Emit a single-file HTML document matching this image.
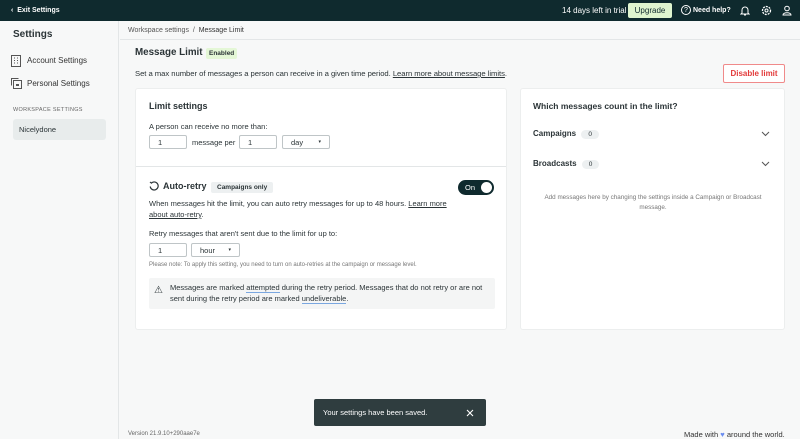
<!DOCTYPE html>
<html><head><style>
*{box-sizing:border-box;margin:0;padding:0}
body{width:800px;height:439px;overflow:hidden;font-family:"Liberation Sans",sans-serif;background:#f7f8f8;color:#2b3437;position:relative;font-size:8px}
.abs{position:absolute}
.top{left:0;top:0;width:800px;height:21px;background:#0f2a2e;color:#fff}
.side{left:0;top:21px;width:119px;height:418px;background:#f7f8f8;border-right:1px solid #e3e6e7}
.crumb{left:120px;top:21px;width:680px;height:19px;border-bottom:1px solid #e3e6e7;font-size:7px;color:#555}
.card{background:#fff;border:1px solid #eceeee;border-radius:3px}
.inp{position:absolute;height:14px;border:1px solid #bfc5c7;border-radius:2px;background:#fff;font-size:7.5px;padding:2px 8px;line-height:9px}
a,u{color:#2b3437}
.pill{display:inline-block;background:#edf0f1;border-radius:5px;font-size:6.5px;padding:1px 7px}
</style></head><body>
<div class="abs top">
 <div class="abs" style="left:11px;top:7px;font-size:7px;font-weight:bold">‹&nbsp;&nbsp;Exit Settings</div>
 <div class="abs" style="left:562px;top:6px;font-size:8px">14 days left in trial</div>
 <div class="abs" style="left:628px;top:3px;width:44px;height:15px;background:#dff5cf;color:#0f2a2e;border-radius:2px;font-size:8px;text-align:center;line-height:15px">Upgrade</div>
 <div class="abs" style="left:681px;top:5px;width:10px;height:10px;border:1px solid #fff;border-radius:50%;font-size:7px;text-align:center;line-height:9px">?</div>
 <div class="abs" style="left:693px;top:7px;font-size:7px;font-weight:bold">Need help?</div>
 <svg class="abs" style="left:740px;top:5px" width="10" height="11" viewBox="0 0 10 11"><path d="M2 8V5a3 3 0 016 0v3l1 1H1z M4 10h2" fill="none" stroke="#fff" stroke-width="1"/></svg>
 <svg class="abs" style="left:761px;top:5px" width="11" height="11" viewBox="0 0 11 11"><circle cx="5.5" cy="5.5" r="4" fill="none" stroke="#fff" stroke-width="1.3" stroke-dasharray="2 1"/><circle cx="5.5" cy="5.5" r="1.5" fill="none" stroke="#fff"/></svg>
 <svg class="abs" style="left:782px;top:5px" width="10" height="11" viewBox="0 0 10 11"><circle cx="5" cy="3.5" r="2.3" fill="none" stroke="#fff"/><path d="M1 10c0-3 8-3 8 0z" fill="none" stroke="#fff"/></svg>
</div>
<div class="abs side">
 <div class="abs" style="left:13px;top:8px;font-size:10px;font-weight:bold">Settings</div>
 <svg class="abs" style="left:11px;top:34px" width="10" height="12" viewBox="0 0 10 12"><rect x="0.5" y="0.5" width="9" height="11" fill="none" stroke="#555"/><path d="M3 3h1M6 3h1M3 5.5h1M6 5.5h1M3 8h1M6 8h1" stroke="#555"/></svg>
 <div class="abs" style="left:27px;top:35px;font-size:8px;color:#333">Account Settings</div>
 <svg class="abs" style="left:11px;top:57px" width="11" height="11" viewBox="0 0 11 11"><path d="M0.5 7.5V0.5h7" fill="none" stroke="#555"/><rect x="2.5" y="2.5" width="8" height="8" fill="none" stroke="#555"/><rect x="5" y="6" width="3" height="2" fill="#555"/></svg>
 <div class="abs" style="left:27px;top:58px;font-size:8px;color:#333">Personal Settings</div>
 <div class="abs" style="left:13px;top:86px;font-size:5.5px;color:#666;letter-spacing:.3px">WORKSPACE SETTINGS</div>
 <div class="abs" style="left:13px;top:98px;width:93px;height:21px;background:#e8ecec;border-radius:3px;font-size:7.5px;padding:6px 6px">Nicelydone</div>
</div>
<div class="abs crumb"><span class="abs" style="left:8px;top:6px">Workspace settings &nbsp;/&nbsp; <span style="color:#333">Message Limit</span></span></div>
<div class="abs" style="left:135px;top:47px;font-size:9.8px;font-weight:bold">Message Limit</div>
<div class="abs" style="left:206px;top:48px;background:#e4f7d6;font-size:6.5px;font-weight:bold;padding:2px 3px;border-radius:2px">Enabled</div>
<div class="abs" style="left:135px;top:69px;font-size:7.7px;letter-spacing:-0.05px">Set a max number of messages a person can receive in a given time period. <u>Learn more about message limits</u>.</div>
<div class="abs" style="left:723px;top:64px;width:62px;height:19px;border:1px solid #f08a8a;border-radius:2px;color:#e23a3a;font-size:8px;font-weight:bold;text-align:center;line-height:17px;background:#fff">Disable limit</div>

<div class="abs card" style="left:135px;top:88px;width:372px;height:242px">
 <div class="abs" style="left:13px;top:12px;font-size:9px;font-weight:bold">Limit settings</div>
 <div class="abs" style="left:13px;top:33px;font-size:7.5px">A person can receive no more than:</div>
 <div class="inp" style="left:13px;top:46px;width:38px">1</div>
 <div class="abs" style="left:56px;top:49px;font-size:7.5px">message per</div>
 <div class="inp" style="left:103px;top:46px;width:38px">1</div>
 <div class="inp" style="left:146px;top:46px;width:48px">day<span style="float:right;font-size:5px">▾</span></div>
 <div class="abs" style="left:0;top:77px;width:370px;border-top:1px solid #e3e6e7"></div>
 <svg class="abs" style="left:13px;top:92px" width="10" height="10" viewBox="0 0 10 10"><path d="M2 2.5A4 4 0 1 1 1.2 5.5" fill="none" stroke="#2b3437" stroke-width="1.2"/><path d="M0.5 1.5L2.5 2.5 2 0.5" fill="#2b3437"/></svg>
 <div class="abs" style="left:27px;top:92px;font-size:9px;font-weight:bold">Auto-retry</div>
 <div class="abs" style="left:75px;top:93px;background:#edf0f1;font-size:6.5px;font-weight:bold;padding:2px 6px;border-radius:2px">Campaigns only</div>
 <div class="abs" style="left:322px;top:91px;width:36px;height:15px;background:#0f2a2e;border-radius:8px;color:#fff;font-size:7.5px;padding:3px 7px">On<div class="abs" style="right:2px;top:2px;width:11px;height:11px;border-radius:50%;background:#fff"></div></div>
 <div class="abs" style="left:13px;top:109px;width:300px;font-size:7.5px;line-height:11px">When messages hit the limit, you can auto retry messages for up to 48 hours. <u>Learn more about auto-retry</u>.</div>
 <div class="abs" style="left:13px;top:140px;font-size:7.5px">Retry messages that aren't sent due to the limit for up to:</div>
 <div class="inp" style="left:13px;top:154px;width:38px">1</div>
 <div class="inp" style="left:55px;top:154px;width:49px">hour<span style="float:right;font-size:5px">▾</span></div>
 <div class="abs" style="left:13px;top:173px;font-size:6px;color:#777">Please note: To apply this setting, you need to turn on auto-retries at the campaign or message level.</div>
 <div class="abs" style="left:13px;top:189px;width:346px;height:31px;background:#f4f5f5;border-radius:2px">
  <div class="abs" style="left:5px;top:7px;font-size:10px">⚠</div>
  <div class="abs" style="left:21px;top:4px;width:320px;font-size:7.5px;line-height:11px">Messages are marked <span style="border-bottom:1px solid #7aa7e0">attempted</span> during the retry period. Messages that do not retry or are not sent during the retry period are marked <span style="border-bottom:1px solid #7aa7e0">undeliverable</span>.</div>
 </div>
</div>

<div class="abs card" style="left:520px;top:88px;width:265px;height:242px">
 <div class="abs" style="left:12px;top:12px;font-size:8.5px;font-weight:bold">Which messages count in the limit?</div>
 <div class="abs" style="left:12px;top:40px;font-size:8px;font-weight:bold">Campaigns <span class="pill" style="font-weight:normal;margin-left:3px">0</span></div>
 <svg class="abs" style="left:240px;top:42px" width="9" height="6" viewBox="0 0 9 6"><path d="M1 1l3.5 3.5L8 1" fill="none" stroke="#555" stroke-width="1"/></svg>
 <div class="abs" style="left:12px;top:70px;font-size:8px;font-weight:bold">Broadcasts <span class="pill" style="font-weight:normal;margin-left:3px">0</span></div>
 <svg class="abs" style="left:240px;top:72px" width="9" height="6" viewBox="0 0 9 6"><path d="M1 1l3.5 3.5L8 1" fill="none" stroke="#555" stroke-width="1"/></svg>
 <div class="abs" style="left:12px;top:104px;width:240px;text-align:center;font-size:6.3px;color:#777;line-height:10px">Add messages here by changing the settings inside a Campaign or Broadcast message.</div>
</div>

<div class="abs" style="left:314px;top:399px;width:172px;height:27px;background:#2f3d3f;border-radius:2px;color:#fff;font-size:7.5px">
 <div class="abs" style="left:9px;top:9px">Your settings have been saved.</div>
 <svg class="abs" style="left:152px;top:10px" width="8" height="8" viewBox="0 0 8 8"><path d="M1 1l6 6M7 1L1 7" stroke="#fff" stroke-width="1.1"/></svg>
</div>
<div class="abs" style="left:128px;top:431px;font-size:6px;color:#666">Version 21.9.10+290aae7e</div>
<div class="abs" style="left:684px;top:430px;font-size:7.5px;color:#333">Made with <span style="color:#6a8df0">♥</span> around the world.</div>
</body></html>
